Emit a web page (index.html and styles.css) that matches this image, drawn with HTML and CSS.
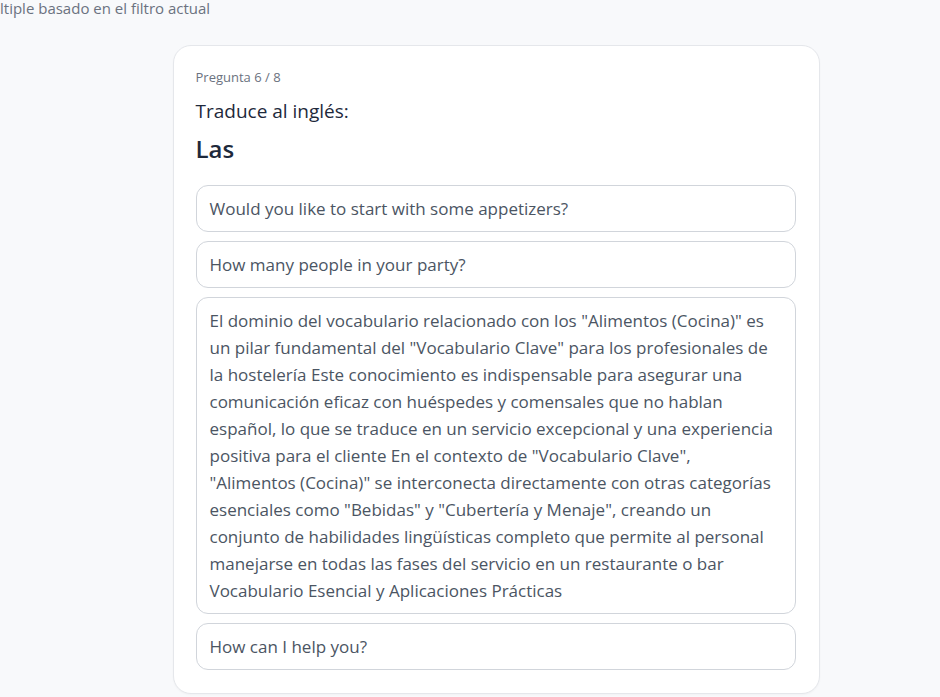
FILE: index.html
```html
<!DOCTYPE html>
<html lang="es">
<head>
<meta charset="utf-8">
<link rel="stylesheet" href="styles.css">
</head>
<body>
<p class="hint">ltiple basado en el filtro actual</p>
<main class="wrap">
  <section class="card">
    <div class="counter">Pregunta 6 / 8</div>
    <div class="prompt">Traduce al inglés:</div>
    <div class="word">Las</div>
    <div class="options">
      <button class="opt">Would you like to start with some appetizers?</button>
      <button class="opt">How many people in your party?</button>
      <button class="opt">El dominio del vocabulario relacionado con los "Alimentos (Cocina)" es un pilar fundamental del "Vocabulario Clave" para los profesionales de la hostelería Este conocimiento es indispensable para asegurar una comunicación eficaz con huéspedes y comensales que no hablan español, lo que se traduce en un servicio excepcional y una experiencia positiva para el cliente En el contexto de "Vocabulario Clave", "Alimentos (Cocina)" se interconecta directamente con otras categorías esenciales como "Bebidas" y "Cubertería y Menaje", creando un conjunto de habilidades lingüísticas completo que permite al personal manejarse en todas las fases del servicio en un restaurante o bar Vocabulario Esencial y Aplicaciones Prácticas</button>
      <button class="opt">How can I help you?</button>
    </div>
  </section>
</main>
</body>
</html>
```

FILE: styles.css
```css
* { box-sizing: border-box; }
html, body { margin: 0; padding: 0; }
body {
  background: #f8f9fb;
  font-family: "Open Sans", "Noto Sans", sans-serif;
  color: #1e293b;
  overflow: hidden;
  height: 697px;
}
.hint {
  margin: 0;
  padding: 0;
  font-size: 15px;
  line-height: 16px;
  color: #6b7280;
  white-space: nowrap;
}
.wrap {
  display: flex;
  justify-content: center;
  padding-top: 29px;
  padding-left: 52px;
}
.card {
  width: 647px;
  background: #fff;
  border: 1px solid #e5e7eb;
  border-radius: 18px;
  padding: 22px 23px 23px 22px;
  box-shadow: 0 1px 2px rgba(0,0,0,0.03);
}
.counter {
  font-size: 13px;
  line-height: 18px;
  color: #6b7280;
}
.prompt {
  margin-top: 13px;
  font-size: 19px;
  line-height: 24px;
  color: #1e293b;
}
.word {
  margin-top: 10px;
  font-size: 24px;
  line-height: 32px;
  font-weight: 600;
  color: #1e293b;
}
.options {
  margin-top: 20px;
  display: flex;
  flex-direction: column;
  gap: 9px;
}
.opt {
  display: block;
  width: 100%;
  text-align: left;
  background: #fff;
  border: 1px solid #d1d5db;
  border-radius: 12px;
  padding: 9px 15px 9px 13px;
  font-family: inherit;
  font-size: 17px;
  line-height: 27px;
  color: #4b5563;
  cursor: pointer;
}
```
